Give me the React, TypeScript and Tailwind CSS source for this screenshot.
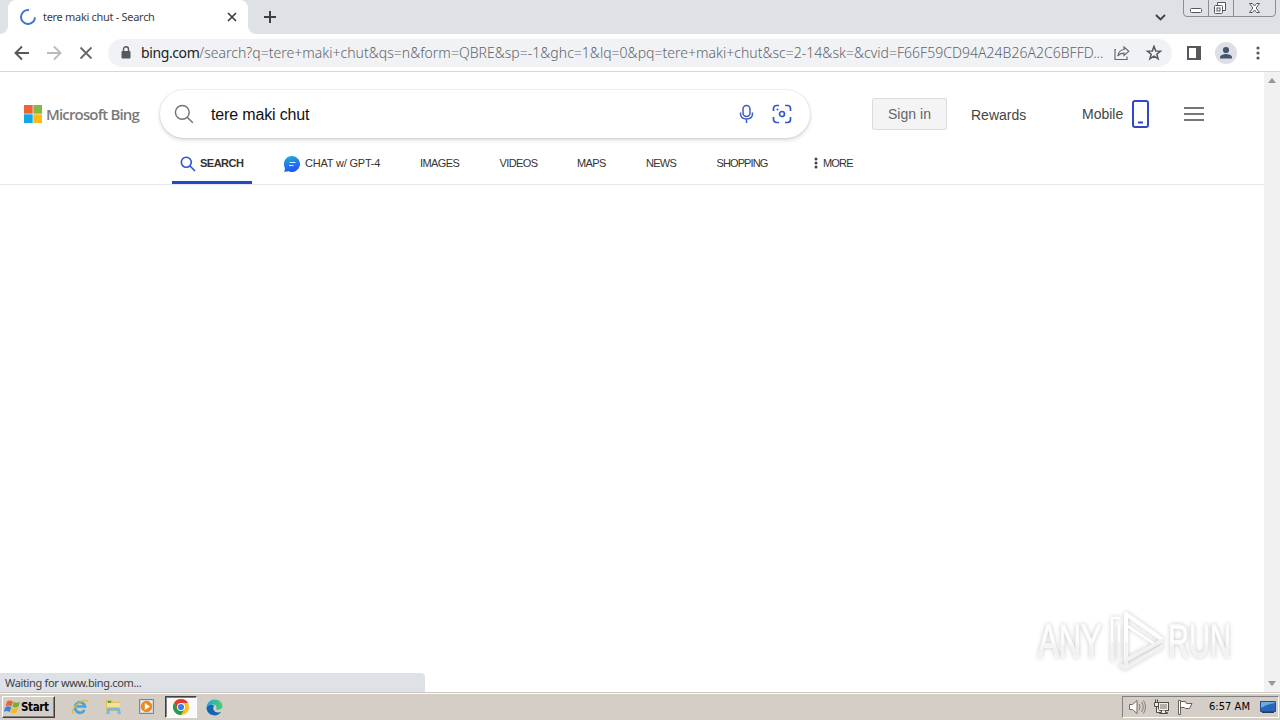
import React from 'react';

const navItems = [
  { label: 'IMAGES', box: 'w-[79.5px]', text: 'tracking-[-0.6px]' },
  { label: 'VIDEOS', box: 'w-[77.5px]', text: 'tracking-[-0.6px]' },
  { label: 'MAPS', box: 'w-[69px]', text: 'tracking-[-0.6px]' },
  { label: 'NEWS', box: 'w-[70.5px]', text: 'tracking-[-0.75px]' },
  { label: 'SHOPPING', box: 'w-[97.5px]', text: 'tracking-[-0.9px]' },
];

const TabStrip: React.FC = () => (
  <div className="flex h-[34px] shrink-0 bg-[#dee1e6]">
    <div className="w-2 bg-white"><div className="h-full rounded-br-lg bg-[#dee1e6]" /></div>
    <div className="flex h-full w-[240px] items-center rounded-t-lg bg-white pl-3">
      <svg width="16" height="16" viewBox="0 0 16 16" fill="none" stroke="#3f78cf" strokeWidth="2">
        <path d="M9 1.1A7 7 0 1 0 15 8.4" />
      </svg>
      <span className="ml-[7px] w-[180px] whitespace-nowrap font-['Noto_Sans',sans-serif] text-[11px] tracking-[-0.3px] text-[#3c4043]">tere maki chut - Search</span>
      <svg width="18" height="10" viewBox="0 0 18 10" fill="none" stroke="#3c4043" strokeWidth="1.7">
        <path d="M5 1l8 8M13 1L5 9" />
      </svg>
    </div>
    <div className="w-2 bg-white"><div className="h-full rounded-bl-lg bg-[#dee1e6]" /></div>
    <div className="flex w-7 items-center justify-center">
      <svg width="12" height="12" viewBox="0 0 12 12" stroke="#3c4043" strokeWidth="2"><path d="M6 0v12M0 6h12" /></svg>
    </div>
    <div className="flex-1" />
    <div className="mr-[17px] flex items-center">
      <svg width="11" height="7" viewBox="0 0 11 7" fill="none" stroke="#3c4043" strokeWidth="1.8"><path d="M1 1l4.5 4.4L10 1" /></svg>
    </div>
    {/* window caption buttons */}
    <svg className="mr-1 h-[17px] w-[93px]" viewBox="0 0 93 17" fill="none" stroke="#8b8e94">
      <path d="M.5 0v13q0 3.5 3.5 3.5h85q3.500 0 3.500-3.500V0M25.500 0v16.500M50.500 0v16.500" />
      <g stroke="#55585f">
        <rect x="7.500" y="8.500" width="11" height="4" rx="1" fill="#fff" />
        <path d="M34.500 5.500v-3h8v8h-2.500" fill="#fff" />
        <rect x="31.500" y="5.500" width="8" height="8" rx="1" fill="#fff" />
        <rect x="34" y="8" width="3" height="3" />
        <path d="M66.500 3.500h3l2 2.500 2-2.500h3l-3.400 4.500 3.400 4.500h-3l-2-2.500-2 2.500h-3L69.900 8z" fill="#fff" />
      </g>
    </svg>
  </div>
);

const Toolbar: React.FC = () => (
  <div className="flex h-[38px] shrink-0 items-center border-b border-[#d5d7da] bg-white">
    <svg className="ml-[14px]" width="16" height="16" viewBox="0 0 16 16" fill="none" stroke="#55585c" strokeWidth="1.9">
      <path d="M15 8H2M8 1.500L1.500 8 8 14.500" />
    </svg>
    <svg className="ml-4" width="16" height="16" viewBox="0 0 16 16" fill="none" stroke="#b8babd" strokeWidth="1.900">
      <path d="M1 8h13M8 1.500L14.500 8 8 14.500" />
    </svg>
    <svg className="ml-4" width="16" height="16" viewBox="0 0 16 16" fill="none" stroke="#66696d" strokeWidth="1.800">
      <path d="M2.500 2.500l11 11M13.500 2.500l-11 11" />
    </svg>
    <div className="ml-[14px] flex h-7 w-[1064px] shrink-0 items-center rounded-full bg-[#f0f2f5] pl-[13px]">
      <svg width="10" height="13" viewBox="0 0 10 13" fill="none">
        <path d="M2.500 6V3.200a2.500 2.500 0 0 1 5 0V6" stroke="#55585c" strokeWidth="1.400" />
        <rect x=".5" y="5" width="9" height="7.500" rx="1" fill="#55585c" />
      </svg>
      <span className="ml-[10px] w-[973px] whitespace-nowrap font-['Noto_Sans',sans-serif] text-[14px] font-light tracking-[0.018px] text-[#606469]">
        <span className="font-normal tracking-[-0.4px] text-[#202124]">bing.com</span>/search?q=tere+maki+chut&amp;qs=n&amp;form=QBRE&amp;sp=-1&amp;ghc=1&amp;lq=0&amp;pq=tere+maki+chut&amp;sc=2-14&amp;sk=&amp;cvid=F66F59CD94A24B26A2C6BFFD...
      </span>
      <svg width="16" height="16" viewBox="0 0 16 16" fill="none" stroke="#66696e" strokeWidth="1.200">
        <path d="M2 4.500H1v10h12v-3" />
        <path d="M10 2l4.800 4.300L10 10.500V8.200c-3 0-4.800.8-6.200 2.800.5-3.500 2.500-6 6.200-6.500z" />
      </svg>
      <svg className="ml-4" width="16" height="16" viewBox="0 0 16 16" fill="none" stroke="#55585c" strokeWidth="1.500">
        <path d="M8 1.300l1.700 4.600 4.900.2-3.800 3.100 1.300 4.700L8 11.200l-4.100 2.700 1.300-4.700L1.400 6.100l4.900-.2z" />
      </svg>
    </div>
    <svg className="ml-[15px]" width="14" height="14" viewBox="0 0 14 14"><path d="M0 0h14v14H0zM2 2v10h7V2z" fill="#55585c" fillRule="evenodd" /></svg>
    <svg className="ml-[14px]" width="22" height="22" viewBox="0 0 22 22">
      <circle cx="11" cy="11" r="11" fill="#dcdfe4" />
      <circle cx="11" cy="8" r="3.100" fill="#46556f" />
      <path d="M5 16.500v-1.200c0-2.200 4-3.300 6-3.300s6 1.100 6 3.300v1.200z" fill="#46556f" />
    </svg>
    <svg className="ml-[19px]" width="4" height="14" viewBox="0 0 4 14" fill="#55585c"><circle cx="2" cy="2" r="1.600" /><circle cx="2" cy="7" r="1.600" /><circle cx="2" cy="12" r="1.600" /></svg>
  </div>
);

const SearchRow: React.FC = () => (
  <div className="flex h-[68px] items-start pt-[18px] pl-6 text-[#444]">
    <svg className="mt-[15px]" width="18" height="18" viewBox="0 0 18 18">
      <path d="M0 0h8.700v8.700H0z" fill="#ee6335" />
      <path d="M9.300 0H18v8.700H9.300z" fill="#82b944" />
      <path d="M0 9.300h8.700V18H0z" fill="#12a8e8" />
      <path d="M9.300 9.300H18V18H9.300z" fill="#fdbd10" />
    </svg>
    <span className="mt-[12px] ml-1 w-[114px] whitespace-nowrap font-['Open_Sans',sans-serif] text-[15px] font-semibold leading-6 tracking-[-0.84px] text-[#7a7a7a]">Microsoft Bing</span>
    <div className="flex h-12 w-[650px] shrink-0 items-center rounded-full bg-white pl-[14px] shadow-[0_0_0_1px_rgba(0,0,0,0.05),0_2px_4px_rgba(0,0,0,0.16)]">
      <svg width="20" height="20" viewBox="0 0 20 20" fill="none" stroke="#70757a" strokeWidth="1.500">
        <circle cx="8.300" cy="8.300" r="6.900" /><path d="M13.200 13.200l5.600 5.600" />
      </svg>
      <span className="ml-[17px] w-[526px] whitespace-nowrap pt-px text-[16px] tracking-[-0.15px] text-[#111]">tere maki chut</span>
      <svg width="18" height="20" viewBox="0 0 18 20" fill="none" stroke="#3c5cc5" strokeWidth="1.500">
        <rect x="6" y="1.500" width="7" height="11" rx="3.500" />
        <path d="M3.500 8.500v1c0 3.500 2.500 5.500 6 5.500s6-2 6-5.500v-1M9.500 15v4" />
      </svg>
      <svg className="ml-[17px]" width="20" height="20" viewBox="0 0 20 20" fill="none" stroke="#3559c7" strokeWidth="1.700">
        <path d="M1.500 7V4.500a3 3 0 0 1 3-3H7M13 1.500h2.500a3 3 0 0 1 3 3V7M18.500 13v2.500a3 3 0 0 1-3 3H13M7 18.500H4.500a3 3 0 0 1-3-3V13" />
        <circle cx="10" cy="10" r="2.500" /><circle cx="5.500" cy="5.500" r="1" fill="#3559c7" stroke="none" />
      </svg>
    </div>
    <div className="mt-2 ml-[62px] flex h-8 w-[75px] shrink-0 items-center justify-center rounded-[2px] border border-[#dcdcdc] bg-[#f4f4f4] text-[14px] tracking-[0.05px] text-[#666]">Sign in</div>
    <span className="mt-[15px] ml-6 w-[87px] text-[14px] leading-5">Rewards</span>
    <span className="mt-[14px] ml-6 w-[49px] text-[14px] leading-5">Mobile</span>
    <svg className="mt-[9px]" width="18" height="30" viewBox="0 0 18 30" fill="none" stroke="#3345c9" strokeWidth="2">
      <rect x="2" y="2" width="15" height="26" rx="2" /><path d="M7 23.500h5" />
    </svg>
    <svg className="mt-[17px] ml-[35px]" width="20" height="14" viewBox="0 0 20 14" fill="#767676"><path d="M0 0h20v2H0zM0 6h20v2H0zM0 12h20v2H0z" /></svg>
  </div>
);

const NavRow: React.FC = () => (
  <div className="flex h-[45px] items-start border-b border-[#e8e8e8] pl-[172px] text-[11px] leading-4 whitespace-nowrap text-[#333]">
    <div className="flex h-11 w-20 shrink-0 border-b-[3px] border-[#2446c8] pl-2 pt-[15px] font-bold">
      <svg className="mt-[1px]" width="16" height="16" viewBox="0 0 16 16" fill="none" stroke="#3150cf" strokeWidth="1.600">
        <circle cx="6.300" cy="6.300" r="5" /><path d="M10 10l5 5" />
      </svg>
      <span className="ml-1 tracking-[-0.5px]">SEARCH</span>
    </div>
    <div className="ml-8 flex w-[136px] shrink-0 pt-[15px]">
      <svg className="mt-px" width="16" height="16" viewBox="0 0 16 16">
        <defs><linearGradient id="chat" x1="0" y1="0" x2="0.300" y2="1"><stop stopColor="#20b0d8" /><stop offset="1" stopColor="#2456f5" /></linearGradient></defs>
        <path d="M8 0a8 8 0 1 1-3.500 15.200L.3 16 1 12A8 8 0 0 1 8 0z" fill="url(#chat)" />
        <path d="M5.500 6.500h6M5 9.500h4.500" stroke="#d8f4ff" strokeWidth="1.200" />
      </svg>
      <span className="ml-[5px] tracking-[-0.2px]">CHAT w/ GPT-4</span>
    </div>
    {navItems.map((item) => (
      <div key={item.label} className={`shrink-0 pt-[15px] ${item.box}`}>
        <span className={item.text}>{item.label}</span>
      </div>
    ))}
    <div className="flex pt-[15px]">
      <svg className="mt-[2px] mr-[5px]" width="4" height="12" viewBox="0 0 4 12" fill="#444"><circle cx="2" cy="2" r="1.500" /><circle cx="2" cy="6" r="1.500" /><circle cx="2" cy="10" r="1.500" /></svg>
      <span className="tracking-[-0.8px]">MORE</span>
    </div>
  </div>
);

const Watermark: React.FC = () => (
  <div className="absolute right-[31px] bottom-[18px] flex h-[66px] w-[196px] items-center text-[47px] leading-[60px] drop-shadow-[0_0_2px_rgba(0,0,0,0.22)]">
    <div className="w-[71px] shrink-0 pl-px">
      <span className="inline-block origin-left scale-x-[0.66] bg-linear-to-b from-white from-50% to-[#f1f1f1] to-60% bg-clip-text text-transparent [-webkit-text-stroke:1px_#f8f8f8]">ANY</span>
    </div>
    <svg className="shrink-0" width="60" height="62" viewBox="0 0 60 62" fill="none" stroke="#fff" strokeWidth="4" strokeLinejoin="round">
      <path d="M18 50V4l37 26" />
      <path d="M12 8H4v44M11 15v34M18 15l30 20" strokeWidth="2.5" />
      <path d="M18 50l37-20M11 54l6 4 38-22M18 50v6" stroke="#f1f1f1" />
      <path d="M4 32v20M11 32v17M18 32v18" stroke="#f3f3f3" strokeWidth="3" />
    </svg>
    <div className="w-[65px] shrink-0">
      <span className="inline-block origin-left scale-x-[0.62] bg-linear-to-b from-white from-50% to-[#f1f1f1] to-60% bg-clip-text text-transparent [-webkit-text-stroke:1px_#f8f8f8]">RUN</span>
    </div>
  </div>
);

const Scrollbar: React.FC = () => (
  <div className="flex w-4 shrink-0 flex-col items-center justify-between bg-[#f1f1f1] pt-[6px] pb-[6px]">
    <svg width="8" height="5" viewBox="0 0 8 5" fill="#969696"><path d="M0 5h8L4 0z" /></svg>
    <svg width="8" height="5" viewBox="0 0 8 5" fill="#969696"><path d="M0 0h8L4 5z" /></svg>
  </div>
);

const Taskbar: React.FC = () => (
  <div className="flex h-7 shrink-0 items-start border-t border-[#c9c6c0] bg-[#d5cec6] font-['DejaVu_Sans_Condensed','DejaVu_Sans',sans-serif] text-[11px] text-black shadow-[inset_0_1px_0_#fff]">
    <div className="mt-[3px] ml-[2px] flex h-[22px] w-[53px] shrink-0 items-center border border-t-white border-r-[#404040] border-b-[#404040] border-l-white pl-px shadow-[inset_-1px_-1px_0_#808080]">
      <svg className="shrink-0" width="17" height="16" viewBox="0 0 17 16">
        <path d="M3 2.500q3-2 6 0L7.500 7.300q-3-1.800-6 0z" fill="#e9652b" />
        <path d="M9.800 2.800q3 1.800 6.200 0l-1.500 4.800q-3 1.800-6 0z" fill="#76ad3a" />
        <path d="M1.300 8.200q3-2 6 0L5.800 13q-3-2-6 0z" fill="#3b83d6" />
        <path d="M8.200 8.600q3 2 6 0L12.700 13.400q-3 1.800-6 0z" fill="#f4bc20" />
      </svg>
      <span className="pt-px text-[11.500px] font-bold tracking-[-0.35px]">Start</span>
    </div>
    <div className="ml-4 flex h-full items-center">
      <svg width="18" height="18" viewBox="0 0 18 18" fill="none">
        <path d="M13.500 12A5 5.300 0 1 1 14 8.500H6" stroke="#43a5dd" strokeWidth="2.700" />
        <path d="M2.500 15.500c-3-1 1-8 6-11 4-2.800 8-3.500 7.500-.5" stroke="#e5b83a" strokeWidth="1.400" />
      </svg>
      <svg className="ml-4" width="17" height="17" viewBox="0 0 17 17">
        <path d="M1 2h6l1 2h7v9H1z" fill="#e4bd55" /><path d="M2 5h13v6H2z" fill="#f6e192" />
        <path d="M3 3h3v2H3z" fill="#4da25c" /><path d="M1 16l1.500-6.500h12L16 16h-3.500v-3.500h-8V16z" fill="#76b9dd" />
      </svg>
      <svg className="ml-4" width="17" height="17" viewBox="0 0 17 17">
        <path d="M1.500 1.500h14v14h-14z" fill="#c9d9e8" stroke="#6288b5" />
        <path d="M3 3h11v11H3z" fill="#e9f2fa" />
        <circle cx="8.500" cy="8.500" r="5.800" fill="#f18a19" /><path d="M6.800 5v7L12 8.500z" fill="#fff" />
      </svg>
    </div>
    <div className="mt-[3px] ml-[10px] flex h-[22px] w-8 shrink-0 items-center justify-center border border-t-[#404040] border-r-white border-b-white border-l-[#404040] bg-[#fafafa] shadow-[inset_1px_1px_0_#808080]">
      <svg width="16" height="16" viewBox="0 0 16 16">
        <circle cx="8" cy="8" r="8" fill="#fbc116" />
        <path d="M1.070 4A8 8 0 0 1 14.930 4H8L4.540 10z" fill="#e33b2e" />
        <path d="M1.070 4A8 8 0 0 0 8 16l3.460-6L8 12 4.540 10z" fill="#229a50" />
        <circle cx="8" cy="8" r="4" fill="#fff" /><circle cx="8" cy="8" r="3.100" fill="#3f7ee8" />
      </svg>
    </div>
    <svg className="mt-[6px] ml-[9px]" width="17" height="17" viewBox="0 0 17 17">
      <defs><linearGradient id="edge"><stop stopColor="#17a5e5" /><stop offset="1" stopColor="#57ce65" /></linearGradient></defs>
      <path d="M.5 8.500a8 8 0 0 0 14.500 4.600C11 14.500 7.500 12.500 7.200 9.500c0-1.200.5-2 1.100-2.500C6 4.500 1.500 5 .5 8.500z" fill="#1266b4" />
      <path d="M.5 8.500C1 3 5 .3 9 .5c5 .2 8 4 7.500 7.300-.4 2.600-4 3.700-6.500 2.700.9-1.500 1-5-3-5-3.300 0-5.500 1.500-6.500 3z" fill="url(#edge)" />
    </svg>
    <div className="flex-1" />
    <div className="mt-[3px] mr-px flex h-[22px] w-[157px] shrink-0 items-center border border-t-[#808080] border-r-white border-b-white border-l-[#808080] pl-[6px]">
      <svg width="17" height="16" viewBox="0 0 17 16" fill="#fff" stroke="#6d6962">
        <path d="M.5 5.500h3L8 1.500v13l-4.500-4h-3z" />
        <path d="M10 5q2 3 0 6M12.500 3q3.500 5 0 10M14.500 1.500q4 6.500 0 13" fill="none" strokeWidth=".8" />
      </svg>
      <svg className="ml-[7px]" width="17" height="16" viewBox="0 0 17 16" fill="#eee" stroke="#514e49">
        <rect x="5.500" y="3.500" width="10" height="8" /><rect x="7" y="5" width="7" height="5" fill="#b3afa8" stroke="none" />
        <path d="M8.500 11.500v2h-2v1h8v-1h-2v-2M1.500 3.500h4v4h-4zM2.500 3.500v-3M4.500 3.500v-3M3.500 7.500v6h4" />
      </svg>
      <svg className="ml-[7px]" width="16" height="16" viewBox="0 0 16 16" fill="#fff" stroke="#65615b">
        <path d="M1.500 1.500v14h2v-14zM3.500 2.500h5l1 2h5.500l-2.500 5h-4l-1-1h-4z" />
      </svg>
      <span className="ml-[16px] w-[51px] whitespace-nowrap pt-px tracking-[0.05px]">6:57 AM</span>
      <svg width="16" height="14" viewBox="0 0 16 14">
        <path d="M.5 1.500h15v10H.5z" fill="#2866b9" stroke="#244d87" /><path d="M1 2h14v1Q7 4 1 8z" fill="#69aae7" /><path d="M2 12h12v1H2z" fill="#273a54" />
      </svg>
    </div>
  </div>
);

const App: React.FC = () => (
  <div className="flex h-[720px] w-[1280px] flex-col overflow-hidden bg-white font-['Liberation_Sans',Arial,sans-serif]">
    <TabStrip />
    <Toolbar />
    <div className="flex h-[620px] shrink-0">
      <div className="relative flex min-w-0 flex-1 flex-col">
        <SearchRow />
        <NavRow />
        <Watermark />
        <div className="mt-auto flex h-[19px] w-[425px] items-center rounded-tr-[4px] bg-[#dee1e6] pt-px pl-[5px] font-['Noto_Sans',sans-serif] text-[11px] text-[#3c4043]">
          <span className="tracking-[-0.35px]">Waiting for www.bing.com...</span>
        </div>
      </div>
      <Scrollbar />
    </div>
    <Taskbar />
  </div>
);

export default App;
